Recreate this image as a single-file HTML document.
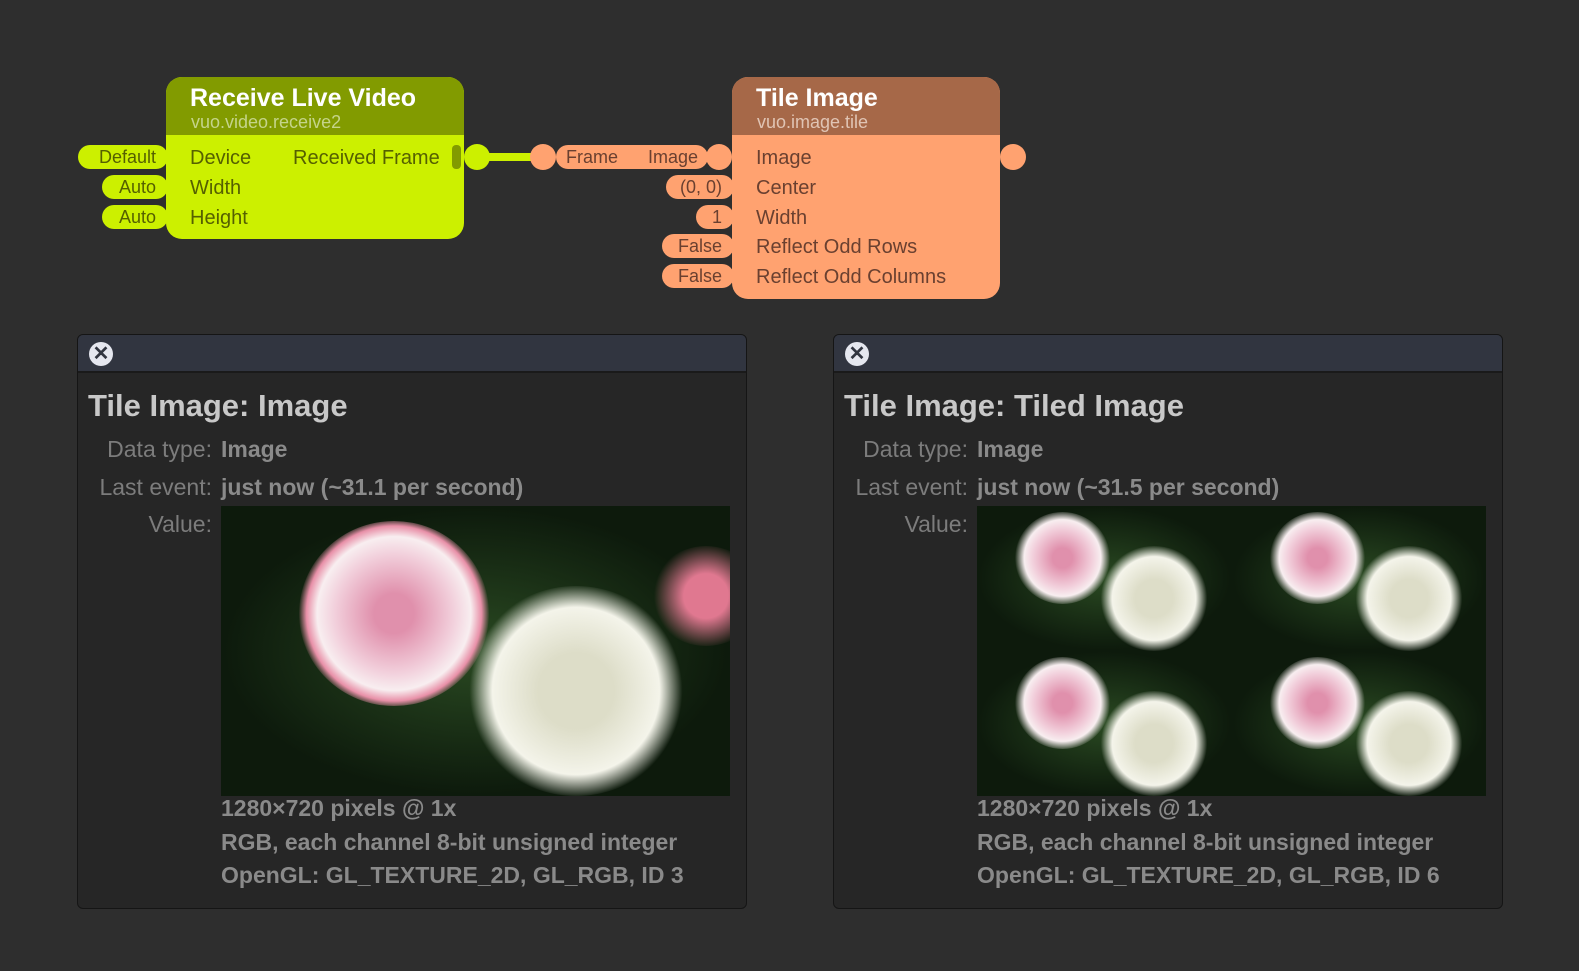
<!DOCTYPE html>
<html><head><style>
body{margin:0;width:1579px;height:971px;background:#2e2e2e;position:relative;overflow:hidden;font-family:"Liberation Sans",sans-serif}
.a{position:absolute}
.pill{position:absolute;height:24px;border-radius:12px;font-size:18px;line-height:24px;text-align:right;padding:0 12px 0 10px;box-sizing:border-box}
.g{background:#ccf000;color:#556000}
.o{background:#ffa270;color:#6a4030}
.port{position:absolute;font-size:20px;line-height:24px}
.dot{position:absolute;width:26px;height:26px;border-radius:50%}
.panel{position:absolute;top:334px;width:668px;height:573px;background:#262626;border:1px solid #151515;border-radius:6px;overflow:hidden}
.bar{height:36px;background:#313540;border-bottom:2px solid #1a1a1a}
.x{position:absolute;left:11px;top:7px;width:24px;height:24px;border-radius:50%;background:#e5e7ef;color:#313540;font-size:20px;font-weight:bold;line-height:24px;text-align:center}
.h{position:absolute;left:10px;top:53px;font-size:31px;font-weight:bold;color:#c8c8c8}
.lab{position:absolute;right:534px;font-size:23px;color:#7c7c7c;text-align:right;white-space:nowrap}
.val{position:absolute;left:143px;font-size:23px;font-weight:bold;color:#8a8a8a;white-space:nowrap}
.img{position:absolute;left:143px;top:171px;width:509px;height:290px;overflow:hidden;background:#10200f}
.fl{position:absolute;border-radius:50%}
</style></head><body>

<div class="a" style="left:166px;top:77px;width:298px;height:162px;background:#ccf000;border-radius:16px;overflow:hidden">
 <div style="height:58px;background:#829b00"></div>
</div>
<div class="a" style="left:190px;top:84px;font-size:25px;font-weight:bold;color:#fff">Receive Live Video</div>
<div class="a" style="left:191px;top:112px;font-size:18px;color:#c5d48a">vuo.video.receive2</div>
<div class="pill g" style="left:78px;top:145px;width:90px">Default</div>
<div class="pill g" style="left:102px;top:175px;width:66px">Auto</div>
<div class="pill g" style="left:102px;top:205px;width:66px">Auto</div>
<div class="port" style="left:190px;top:146px;color:#556000">Device</div>
<div class="port" style="left:190px;top:176px;color:#556000">Width</div>
<div class="port" style="left:190px;top:206px;color:#556000">Height</div>
<div class="port" style="left:293px;top:146px;color:#556000">Received Frame</div>
<div class="a" style="left:452px;top:145px;width:9px;height:24px;border-radius:4px;background:#829b00"></div>
<div class="dot" style="left:464px;top:144px;background:#ccf000"></div>
<div class="a" style="left:480px;top:153px;width:60px;height:8px;background:#ccf000"></div>

<div class="dot" style="left:530px;top:144px;background:#ffa270"></div>
<div class="pill o" style="left:556px;top:145px;width:152px;text-align:left;padding-left:10px">Frame&nbsp;&nbsp;&nbsp;&nbsp;&nbsp;&nbsp;Image</div>
<div class="dot" style="left:706px;top:144px;background:#ffa270"></div>
<div class="a" style="left:732px;top:77px;width:268px;height:222px;background:#ffa270;border-radius:16px;overflow:hidden">
 <div style="height:58px;background:#a66848"></div>
</div>
<div class="a" style="left:756px;top:84px;font-size:25px;font-weight:bold;color:#fff">Tile Image</div>
<div class="a" style="left:757px;top:112px;font-size:18px;color:#e0c4b4">vuo.image.tile</div>
<div class="dot" style="left:1000px;top:144px;background:#ffa270"></div>
<div class="pill o" style="left:666px;top:175px;width:68px">(0, 0)</div>
<div class="pill o" style="left:696px;top:205px;width:38px">1</div>
<div class="pill o" style="left:662px;top:234px;width:72px">False</div>
<div class="pill o" style="left:662px;top:264px;width:72px">False</div>
<div class="port" style="left:756px;top:146px;color:#6a4030">Image</div>
<div class="port" style="left:756px;top:176px;color:#6a4030">Center</div>
<div class="port" style="left:756px;top:206px;color:#6a4030">Width</div>
<div class="port" style="left:756px;top:235px;color:#6a4030">Reflect Odd Rows</div>
<div class="port" style="left:756px;top:265px;color:#6a4030">Reflect Odd Columns</div>

<div class="panel" style="left:77px">
 <div class="bar"></div><div class="x">✕</div>
 <div class="h">Tile Image: Image</div>
 <div class="lab" style="top:101px">Data type:</div><div class="val" style="top:101px">Image</div>
 <div class="lab" style="top:139px">Last event:</div><div class="val" style="top:139px">just now (~31.1 per second)</div>
 <div class="lab" style="top:176px">Value:</div>
 <div class="img" style="background:radial-gradient(ellipse at 50% 50%,#2a4a22,#0d1a0c 70%)">
  <div class="fl" style="left:78px;top:15px;width:190px;height:185px;background:radial-gradient(circle,#e090ac 15%,#f2d0dc 45%,#f8eef0 58%,#e890a8 66%,transparent 72%)"></div>
  <div class="fl" style="left:245px;top:80px;width:220px;height:210px;background:radial-gradient(circle,#ddddc8 25%,#f4f4ea 55%,transparent 70%)"></div>
  <div class="fl" style="left:430px;top:40px;width:110px;height:100px;background:radial-gradient(circle,#e07890 30%,transparent 70%)"></div>
 </div>
 <div class="val" style="top:460px">1280×720 pixels @ 1x</div>
 <div class="val" style="top:494px">RGB, each channel 8-bit unsigned integer</div>
 <div class="val" style="top:527px">OpenGL: GL_TEXTURE_2D, GL_RGB, ID 3</div>
</div>

<div class="panel" style="left:833px">
 <div class="bar"></div><div class="x">✕</div>
 <div class="h">Tile Image: Tiled Image</div>
 <div class="lab" style="top:101px">Data type:</div><div class="val" style="top:101px">Image</div>
 <div class="lab" style="top:139px">Last event:</div><div class="val" style="top:139px">just now (~31.5 per second)</div>
 <div class="lab" style="top:176px">Value:</div>
 <div class="img" style="background:#10200f">
  <div style="display:grid;grid-template-columns:1fr 1fr;grid-template-rows:1fr 1fr;width:100%;height:100%">
   <div style="position:relative;background:radial-gradient(ellipse,#2a4a22,#0d1a0c 70%);overflow:hidden"><div class="fl" style="left:38px;top:6px;width:95px;height:92px;background:radial-gradient(circle,#e090ac 15%,#f2d0dc 45%,#f8eef0 58%,transparent 72%)"></div><div class="fl" style="left:122px;top:40px;width:110px;height:105px;background:radial-gradient(circle,#ddddc8 25%,#f4f4ea 55%,transparent 70%)"></div></div>
   <div style="position:relative;background:radial-gradient(ellipse,#2a4a22,#0d1a0c 70%);overflow:hidden"><div class="fl" style="left:38px;top:6px;width:95px;height:92px;background:radial-gradient(circle,#e090ac 15%,#f2d0dc 45%,#f8eef0 58%,transparent 72%)"></div><div class="fl" style="left:122px;top:40px;width:110px;height:105px;background:radial-gradient(circle,#ddddc8 25%,#f4f4ea 55%,transparent 70%)"></div></div>
   <div style="position:relative;background:radial-gradient(ellipse,#2a4a22,#0d1a0c 70%);overflow:hidden"><div class="fl" style="left:38px;top:6px;width:95px;height:92px;background:radial-gradient(circle,#e090ac 15%,#f2d0dc 45%,#f8eef0 58%,transparent 72%)"></div><div class="fl" style="left:122px;top:40px;width:110px;height:105px;background:radial-gradient(circle,#ddddc8 25%,#f4f4ea 55%,transparent 70%)"></div></div>
   <div style="position:relative;background:radial-gradient(ellipse,#2a4a22,#0d1a0c 70%);overflow:hidden"><div class="fl" style="left:38px;top:6px;width:95px;height:92px;background:radial-gradient(circle,#e090ac 15%,#f2d0dc 45%,#f8eef0 58%,transparent 72%)"></div><div class="fl" style="left:122px;top:40px;width:110px;height:105px;background:radial-gradient(circle,#ddddc8 25%,#f4f4ea 55%,transparent 70%)"></div></div>
  </div>
 </div>
 <div class="val" style="top:460px">1280×720 pixels @ 1x</div>
 <div class="val" style="top:494px">RGB, each channel 8-bit unsigned integer</div>
 <div class="val" style="top:527px">OpenGL: GL_TEXTURE_2D, GL_RGB, ID 6</div>
</div>
</body></html>
